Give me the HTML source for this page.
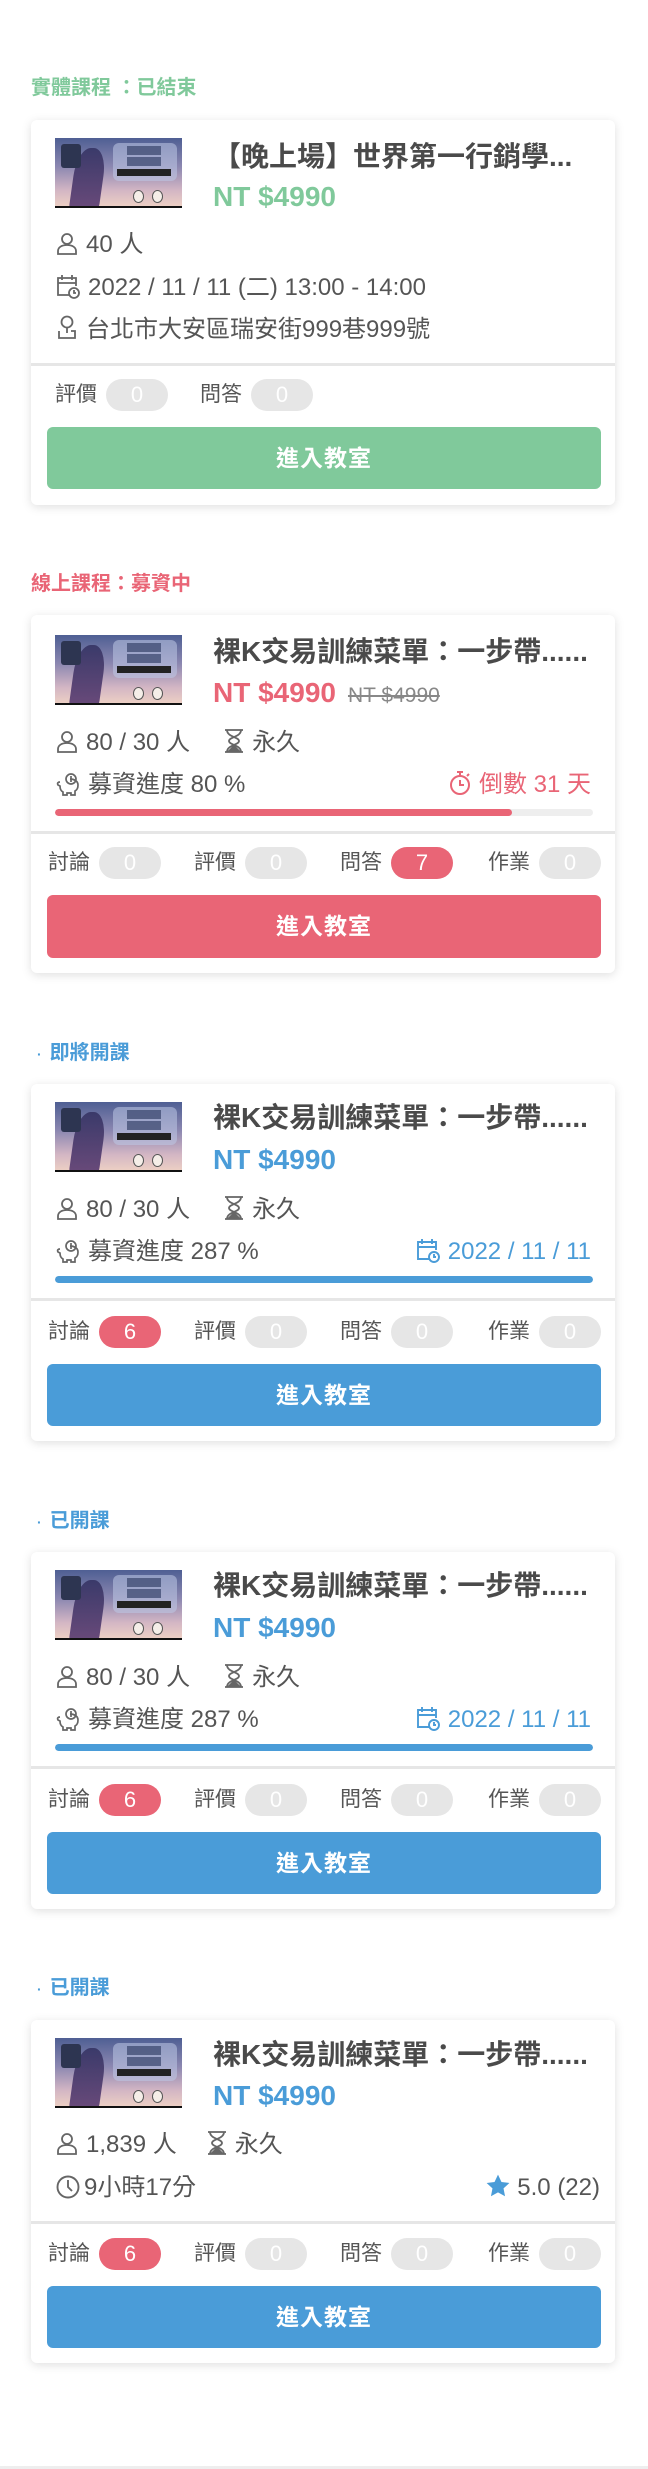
<!DOCTYPE html>
<html><head><meta charset="utf-8">
<style>
*{margin:0;padding:0;box-sizing:border-box}
body{width:648px;height:2469px;background:#fff;position:relative;font-family:"Liberation Sans","Noto Sans CJK TC",sans-serif;color:#555;overflow:hidden}
.hd{position:absolute;left:31px;height:28px;line-height:28px;font-size:20px;font-weight:bold;white-space:nowrap}
.hd .dot{font-size:14px;margin:0 8px 0 6px;vertical-align:middle}
.card{position:absolute;left:31px;width:584px;background:#fff;border-radius:6px;box-shadow:0 2px 10px rgba(0,0,0,.13)}
.card>*{position:absolute}
.img{left:24px;width:127px;height:70px;overflow:hidden;background:linear-gradient(180deg,#4f5f93 0%,#8a86b0 40%,#d3b6c4 75%,#efd2c4 100%)}
.img .box{position:absolute;left:6px;top:6px;width:20px;height:24px;background:#2d3551;border-radius:3px}
.img .pan{position:absolute;left:58px;top:5px;width:64px;height:38px;background:rgba(190,200,230,.55);border-radius:6px}
.img .t1{position:absolute;left:72px;top:8px;width:34px;height:9px;background:#3e4a70;opacity:.75}
.img .t2{position:absolute;left:72px;top:19px;width:34px;height:9px;background:#3e4a70;opacity:.75}
.img .bar{position:absolute;left:62px;top:31px;width:54px;height:7px;background:#222}
.img .sil{position:absolute;left:18px;top:10px;width:30px;height:62px;background:linear-gradient(180deg,#3a3a6a,#6a4a7a);border-radius:45% 45% 10% 10%;transform:skewX(-8deg)}
.img .f1,.img .f2{position:absolute;top:52px;width:11px;height:13px;border-radius:50%;background:#f5eee8;border:1px solid #555}
.img .f1{left:78px}.img .f2{left:97px}
.img .bot{position:absolute;left:0;bottom:0;width:100%;height:2px;background:#111}
.title{left:182px;width:392px;height:36px;line-height:36px;font-size:28px;font-weight:bold;color:#4a4a4a;white-space:nowrap;overflow:hidden}
.price{left:182px;height:36px;line-height:36px;font-size:28px;font-weight:bold;white-space:nowrap}
.price s{font-size:21px;font-weight:normal;color:#888;margin-left:12px}
.row{left:25px;right:24px;height:32px;line-height:32px;font-size:24px;white-space:nowrap;color:#555}
.row svg{vertical-align:-4px;margin-right:8px}
.row .r{position:absolute;right:0;top:0}
.pbar{left:24px;width:538px;height:7px;border-radius:4px;background:#eee;overflow:hidden}
.pbar i{display:block;height:100%;border-radius:4px}
.div{left:0;width:584px;height:3px;background:#e6e6e6}
.lbl{height:32px;line-height:32px;font-size:21px;color:#555;white-space:nowrap}
.pill{display:inline-block;width:62px;height:32px;line-height:32px;border-radius:16px;background:#e6e6e6;color:#fff;text-align:center;font-size:22px;margin-left:9px;vertical-align:top}
.pill.red{background:#e96576}
.btn{left:16px;width:554px;height:62px;line-height:62px;border-radius:6px;color:#fff;text-align:center;font-size:23px;font-weight:bold;letter-spacing:1px}
.g{color:#80c99b}.p{color:#e96576}.b{color:#4a9cd8}
.bg{background:#80c99b}.bp{background:#e96576}.bb{background:#4a9cd8}
</style></head><body>

<!-- Card 1 -->
<div class="hd g" style="top:74px">實體課程 ：已結束</div>
<div class="card" style="top:120px;height:385px">
  <div class="img" style="top:18px"><div class="sil"></div><div class="box"></div><div class="pan"></div><div class="t1"></div><div class="t2"></div><div class="bar"></div><div class="f1"></div><div class="f2"></div><div class="bot"></div></div>
  <div class="title" style="top:19px">【晚上場】世界第一行銷學...</div>
  <div class="price g" style="top:59px">NT $4990</div>
  <div class="row" style="top:109px"><svg width="22" height="24" viewBox="0 0 22 24" fill="none" stroke="#666" stroke-width="1.8"><circle cx="11" cy="7" r="5"/><path d="M2 22v-3c0-3.5 3.5-6 9-6s9 2.5 9 6v3z"/></svg>40 人</div>
  <div class="row" style="top:152px"><svg width="24" height="26" viewBox="0 0 24 26" fill="none" stroke="#666" stroke-width="1.8"><path d="M13 22H2V5h18v8M2 10h18M6 2v5M16 2v5"/><circle cx="18" cy="20" r="5"/><path d="M18 17v3h2"/></svg>2022 / 11 / 11 (二) 13:00 - 14:00</div>
  <div class="row" style="top:194px"><svg width="22" height="26" viewBox="0 0 22 26" fill="none" stroke="#666" stroke-width="1.8"><circle cx="11" cy="7" r="5.5"/><path d="M11 12v6M3 16v7h16v-7h-4"/></svg>台北市大安區瑞安街999巷999號</div>
  <div class="div" style="top:243px"></div>
  <div class="lbl" style="top:259px;left:24px">評價<span class="pill">0</span></div>
  <div class="lbl" style="top:259px;left:169px">問答<span class="pill">0</span></div>
  <div class="btn bg" style="top:307px">進入教室</div>
</div>

<!-- Card 2 -->
<div class="hd p" style="top:570px">線上課程：募資中</div>
<div class="card" style="top:615px;height:358px">
  <div class="img" style="top:20px"><div class="sil"></div><div class="box"></div><div class="pan"></div><div class="t1"></div><div class="t2"></div><div class="bar"></div><div class="f1"></div><div class="f2"></div><div class="bot"></div></div>
  <div class="title" style="top:19px">裸K交易訓練菜單：一步帶......</div>
  <div class="price p" style="top:60px">NT $4990<s>NT $4990</s></div>
  <div class="row" style="top:112px"><svg width="22" height="24" viewBox="0 0 22 24" fill="none" stroke="#666" stroke-width="1.8"><circle cx="11" cy="7" r="5"/><path d="M2 22v-3c0-3.5 3.5-6 9-6s9 2.5 9 6v3z"/></svg>80 / 30 人<span style="display:inline-block;width:34px"></span><svg width="20" height="26" viewBox="0 0 20 26" fill="none" stroke="#666" stroke-width="1.8"><path d="M1 2h18M1 24h18M3 2c0 7 12 7 12 11S3 17 3 24M17 2c0 7-12 7-12 11s12 4 12 11"/><path d="M5 23l5-5 5 5z" fill="#666"/></svg>永久</div>
  <div class="row" style="top:154px"><svg width="24" height="24" viewBox="0 0 24 24" fill="none" stroke="#666" stroke-width="1.7"><path d="M4 10c-2 0-3 1-2 3l2 1c0 3 1 5 3 6v3h4v-2h4v2h4v-4c2-1 3-3 3-6 0-4-4-6-8-6"/><circle cx="15" cy="7" r="5"/><path d="M15 4v6"/></svg>募資進度 80 %<span class="r p"><svg width="22" height="26" viewBox="0 0 22 26" fill="none" stroke="#e96576" stroke-width="2"><circle cx="11" cy="15" r="9"/><path d="M8 2h6M11 2v4M11 10v5h4M18 6l2-2"/></svg>倒數 31 天</span></div>
  <div class="pbar" style="top:194px"><i class="bp" style="width:85%"></i></div>
  <div class="div" style="top:216px"></div>
  <div class="lbl" style="top:232px;left:17px">討論<span class="pill">0</span></div>
  <div class="lbl" style="top:232px;left:163px">評價<span class="pill">0</span></div>
  <div class="lbl" style="top:232px;left:309px">問答<span class="pill red">7</span></div>
  <div class="lbl" style="top:232px;left:457px">作業<span class="pill">0</span></div>
  <div class="btn bp" style="top:280px;height:63px">進入教室</div>
</div>

<!-- Card 3 -->
<div class="hd b" style="top:1039px"><span class="dot">·</span>即將開課</div>
<div class="card" style="top:1084px;height:357px">
  <div class="img" style="top:18px"><div class="sil"></div><div class="box"></div><div class="pan"></div><div class="t1"></div><div class="t2"></div><div class="bar"></div><div class="f1"></div><div class="f2"></div><div class="bot"></div></div>
  <div class="title" style="top:16px">裸K交易訓練菜單：一步帶......</div>
  <div class="price b" style="top:58px">NT $4990</div>
  <div class="row" style="top:110px"><svg width="22" height="24" viewBox="0 0 22 24" fill="none" stroke="#666" stroke-width="1.8"><circle cx="11" cy="7" r="5"/><path d="M2 22v-3c0-3.5 3.5-6 9-6s9 2.5 9 6v3z"/></svg>80 / 30 人<span style="display:inline-block;width:34px"></span><svg width="20" height="26" viewBox="0 0 20 26" fill="none" stroke="#666" stroke-width="1.8"><path d="M1 2h18M1 24h18M3 2c0 7 12 7 12 11S3 17 3 24M17 2c0 7-12 7-12 11s12 4 12 11"/><path d="M5 23l5-5 5 5z" fill="#666"/></svg>永久</div>
  <div class="row" style="top:152px"><svg width="24" height="24" viewBox="0 0 24 24" fill="none" stroke="#666" stroke-width="1.7"><path d="M4 10c-2 0-3 1-2 3l2 1c0 3 1 5 3 6v3h4v-2h4v2h4v-4c2-1 3-3 3-6 0-4-4-6-8-6"/><circle cx="15" cy="7" r="5"/><path d="M15 4v6"/></svg>募資進度 287 %<span class="r b"><svg width="24" height="26" viewBox="0 0 24 26" fill="none" stroke="#4a9cd8" stroke-width="1.9"><path d="M13 22H2V5h18v8M2 10h18M6 2v5M16 2v5"/><circle cx="18" cy="20" r="5"/><path d="M18 17v3h2"/></svg>2022 / 11 / 11</span></div>
  <div class="pbar" style="top:192px"><i class="bb" style="width:100%"></i></div>
  <div class="div" style="top:214px"></div>
  <div class="lbl" style="top:232px;left:17px">討論<span class="pill red">6</span></div>
  <div class="lbl" style="top:232px;left:163px">評價<span class="pill">0</span></div>
  <div class="lbl" style="top:232px;left:309px">問答<span class="pill">0</span></div>
  <div class="lbl" style="top:232px;left:457px">作業<span class="pill">0</span></div>
  <div class="btn bb" style="top:280px">進入教室</div>
</div>

<!-- Card 4 -->
<div class="hd b" style="top:1507px"><span class="dot">·</span>已開課</div>
<div class="card" style="top:1552px;height:357px">
  <div class="img" style="top:18px"><div class="sil"></div><div class="box"></div><div class="pan"></div><div class="t1"></div><div class="t2"></div><div class="bar"></div><div class="f1"></div><div class="f2"></div><div class="bot"></div></div>
  <div class="title" style="top:16px">裸K交易訓練菜單：一步帶......</div>
  <div class="price b" style="top:58px">NT $4990</div>
  <div class="row" style="top:110px"><svg width="22" height="24" viewBox="0 0 22 24" fill="none" stroke="#666" stroke-width="1.8"><circle cx="11" cy="7" r="5"/><path d="M2 22v-3c0-3.5 3.5-6 9-6s9 2.5 9 6v3z"/></svg>80 / 30 人<span style="display:inline-block;width:34px"></span><svg width="20" height="26" viewBox="0 0 20 26" fill="none" stroke="#666" stroke-width="1.8"><path d="M1 2h18M1 24h18M3 2c0 7 12 7 12 11S3 17 3 24M17 2c0 7-12 7-12 11s12 4 12 11"/><path d="M5 23l5-5 5 5z" fill="#666"/></svg>永久</div>
  <div class="row" style="top:152px"><svg width="24" height="24" viewBox="0 0 24 24" fill="none" stroke="#666" stroke-width="1.7"><path d="M4 10c-2 0-3 1-2 3l2 1c0 3 1 5 3 6v3h4v-2h4v2h4v-4c2-1 3-3 3-6 0-4-4-6-8-6"/><circle cx="15" cy="7" r="5"/><path d="M15 4v6"/></svg>募資進度 287 %<span class="r b"><svg width="24" height="26" viewBox="0 0 24 26" fill="none" stroke="#4a9cd8" stroke-width="1.9"><path d="M13 22H2V5h18v8M2 10h18M6 2v5M16 2v5"/><circle cx="18" cy="20" r="5"/><path d="M18 17v3h2"/></svg>2022 / 11 / 11</span></div>
  <div class="pbar" style="top:192px"><i class="bb" style="width:100%"></i></div>
  <div class="div" style="top:214px"></div>
  <div class="lbl" style="top:232px;left:17px">討論<span class="pill red">6</span></div>
  <div class="lbl" style="top:232px;left:163px">評價<span class="pill">0</span></div>
  <div class="lbl" style="top:232px;left:309px">問答<span class="pill">0</span></div>
  <div class="lbl" style="top:232px;left:457px">作業<span class="pill">0</span></div>
  <div class="btn bb" style="top:280px">進入教室</div>
</div>

<!-- Card 5 -->
<div class="hd b" style="top:1974px"><span class="dot">·</span>已開課</div>
<div class="card" style="top:2020px;height:343px">
  <div class="img" style="top:18px"><div class="sil"></div><div class="box"></div><div class="pan"></div><div class="t1"></div><div class="t2"></div><div class="bar"></div><div class="f1"></div><div class="f2"></div><div class="bot"></div></div>
  <div class="title" style="top:17px">裸K交易訓練菜單：一步帶......</div>
  <div class="price b" style="top:58px">NT $4990</div>
  <div class="row" style="top:109px"><svg width="22" height="24" viewBox="0 0 22 24" fill="none" stroke="#666" stroke-width="1.8"><circle cx="11" cy="7" r="5"/><path d="M2 22v-3c0-3.5 3.5-6 9-6s9 2.5 9 6v3z"/></svg>1,839 人<span style="display:inline-block;width:30px"></span><svg width="20" height="26" viewBox="0 0 20 26" fill="none" stroke="#666" stroke-width="1.8"><path d="M1 2h18M1 24h18M3 2c0 7 12 7 12 11S3 17 3 24M17 2c0 7-12 7-12 11s12 4 12 11"/><path d="M5 23l5-5 5 5z" fill="#666"/></svg>永久</div>
  <div class="row" style="top:152px;right:15px"><svg width="24" height="24" viewBox="0 0 24 24" fill="none" stroke="#666" stroke-width="1.9" style="margin-right:4px"><circle cx="12" cy="12" r="10.5"/><path d="M12 5v7l4 4"/></svg>9小時17分<span class="r"><svg width="26" height="26" viewBox="0 0 24 24" style="margin-right:6px"><path d="M12 1.5l3.2 6.8 7.3.9-5.4 5 1.4 7.3L12 17.9l-6.5 3.6 1.4-7.3-5.4-5 7.3-.9z" fill="#4a9cd8"/></svg>5.0 (22)</span></div>
  <div class="div" style="top:201px"></div>
  <div class="lbl" style="top:218px;left:17px">討論<span class="pill red">6</span></div>
  <div class="lbl" style="top:218px;left:163px">評價<span class="pill">0</span></div>
  <div class="lbl" style="top:218px;left:309px">問答<span class="pill">0</span></div>
  <div class="lbl" style="top:218px;left:457px">作業<span class="pill">0</span></div>
  <div class="btn bb" style="top:266px">進入教室</div>
</div>

<div style="position:absolute;left:0;top:2466px;width:648px;height:3px;background:#eee"></div>
</body></html>
